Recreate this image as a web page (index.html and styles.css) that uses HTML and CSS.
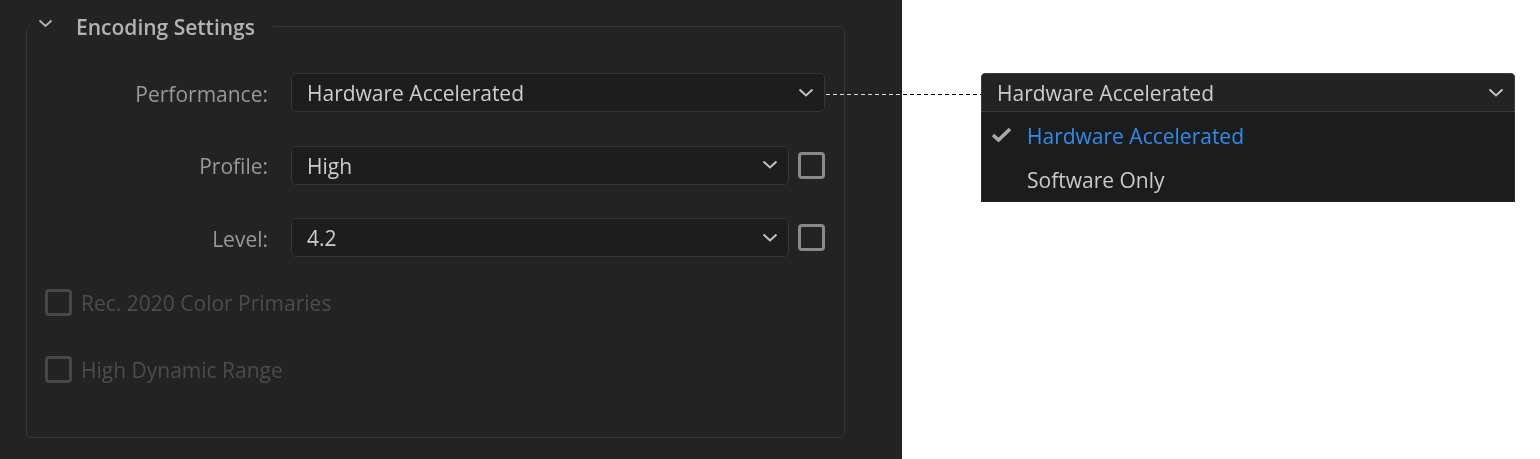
FILE: index.html
```html
<!DOCTYPE html>
<html lang="en">
<head>
<meta charset="utf-8">
<title>Encoding Settings</title>
<link rel="stylesheet" href="styles.css">
</head>
<body>
<div class="page">
  <section class="panel">
    <fieldset class="group">
      <legend class="group-title">
        <svg class="twisty" width="15" height="9" viewBox="0 0 15 9"><polyline points="1.5,1.5 7.5,7 13.5,1.5" fill="none" stroke="#b3b3b3" stroke-width="2"/></svg>
        <span>Encoding Settings</span>
      </legend>
      <div class="rows">
        <div class="row">
          <span class="label">Performance:</span>
          <div class="select">
            <span class="value">Hardware Accelerated</span>
            <svg class="caret" width="16" height="9" viewBox="0 0 16 9"><polyline points="1.5,1.5 8,7.5 14.5,1.5" fill="none" stroke="#c4c4c4" stroke-width="2"/></svg>
          </div>
        </div>
        <div class="row">
          <span class="label">Profile:</span>
          <div class="select">
            <span class="value">High</span>
            <svg class="caret" width="16" height="9" viewBox="0 0 16 9"><polyline points="1.5,1.5 8,7.5 14.5,1.5" fill="none" stroke="#c4c4c4" stroke-width="2"/></svg>
          </div>
          <span class="box"></span>
        </div>
        <div class="row">
          <span class="label">Level:</span>
          <div class="select">
            <span class="value">4.2</span>
            <svg class="caret" width="16" height="9" viewBox="0 0 16 9"><polyline points="1.5,1.5 8,7.5 14.5,1.5" fill="none" stroke="#c4c4c4" stroke-width="2"/></svg>
          </div>
          <span class="box"></span>
        </div>
      </div>
      <div class="check check-first">
        <span class="box box-off"></span>
        <span class="check-text">Rec. 2020 Color Primaries</span>
      </div>
      <div class="check check-second">
        <span class="box box-off"></span>
        <span class="check-text">High Dynamic Range</span>
      </div>
    </fieldset>
  </section>
  <section class="callout">
    <div class="menu">
      <div class="select select-open">
        <span class="value">Hardware Accelerated</span>
        <svg class="caret" width="16" height="9" viewBox="0 0 16 9"><polyline points="1.5,1.5 8,7.5 14.5,1.5" fill="none" stroke="#c4c4c4" stroke-width="2"/></svg>
      </div>
      <ul class="options">
        <li class="option option-selected">
          <svg class="tick" width="21" height="15" viewBox="0 0 21 15"><polyline points="2,8 7.5,13 19,2" fill="none" stroke="#a9a9a9" stroke-width="3.6"/></svg>
          <span>Hardware Accelerated</span>
        </li>
        <li class="option">
          <span class="tick-space"></span>
          <span>Software Only</span>
        </li>
      </ul>
    </div>
  </section>
  <div class="connector"></div>
</div>
</body>
</html>
```
FILE: styles.css
```css
* { box-sizing: border-box; }

html, body {
  margin: 0;
  padding: 0;
  background: #ffffff;
}

body {
  font-family: "Open Sans", "Noto Sans", sans-serif;
}

.page {
  position: relative;
  display: flex;
  width: 1540px;
  height: 459px;
  overflow: hidden;
}

.panel {
  width: 902px;
  height: 459px;
  background: #232323;
  padding: 12px 0 0 26px;
}

.group {
  width: 819px;
  height: 426px;
  margin: 0;
  padding: 0 19px 0 18px;
  border: 1px solid #363636;
  border-radius: 5px;
}

.group-title {
  display: flex;
  align-items: center;
  height: 28px;
  margin-left: -14px;
  padding: 1px 18px 0 7px;
  color: #b3b3b3;
  font-size: 21px;
  font-weight: 600;
  line-height: 28px;
}

.twisty {
  margin-right: 23px;
  margin-top: -6px;
}

.rows {
  display: flex;
  flex-direction: column;
  gap: 33.5px;
  margin-top: 33px;
}

.row {
  display: flex;
  align-items: center;
  height: 39px;
}

.label {
  width: 223px;
  margin-right: 23px;
  text-align: right;
  color: #999999;
  font-size: 21px;
  padding-top: 2px;
}

.select {
  flex: 1;
  display: flex;
  align-items: center;
  justify-content: space-between;
  height: 39px;
  padding: 0 10px 0 15px;
  background: #1d1d1d;
  border: 1px solid #353535;
  border-radius: 5px;
  color: #cdcdcd;
  font-size: 21px;
}

.value {
  line-height: 1;
  margin-top: 2px;
}

.caret {
  margin-top: -1px;
}

.box {
  width: 27px;
  height: 27px;
  border: 3px solid #8a8a8a;
  border-radius: 4px;
  flex: none;
}

.row .box {
  margin-left: 9px;
}

.check {
  display: flex;
  align-items: center;
  height: 27px;
}

.check-first { margin-top: 32px; }
.check-second { margin-top: 40px; }

.box-off {
  border-color: #474747;
  margin-right: 9px;
}

.check-text {
  color: #4c4c4c;
  font-size: 21px;
  padding-top: 1px;
}

.callout {
  flex: 1;
  padding: 73px 0 0 79px;
}

.menu {
  width: 534px;
}

.select-open {
  flex: none;
  background: #232323;
  border-color: #3a3a3a;
  border-radius: 4px 4px 0 0;
}

.options {
  list-style: none;
  margin: 0;
  padding: 1px 0;
  height: 90px;
  background: #1c1c1c;
  border: 1px solid #262626;
  border-top: none;
}

.option {
  display: flex;
  align-items: center;
  height: 44px;
  padding-left: 9px;
  padding-top: 1px;
  color: #cbcbcb;
  font-size: 21px;
}

.option-selected {
  color: #2f8cee;
}

.tick {
  margin-right: 15px;
  margin-top: -2px;
}

.tick-space {
  width: 36px;
  flex: none;
}

.connector {
  position: absolute;
  left: 826px;
  top: 94px;
  width: 155px;
  height: 1px;
  background: repeating-linear-gradient(to right, #ffffff 0 4px, transparent 4px 7px);
  mix-blend-mode: difference;
}
```
